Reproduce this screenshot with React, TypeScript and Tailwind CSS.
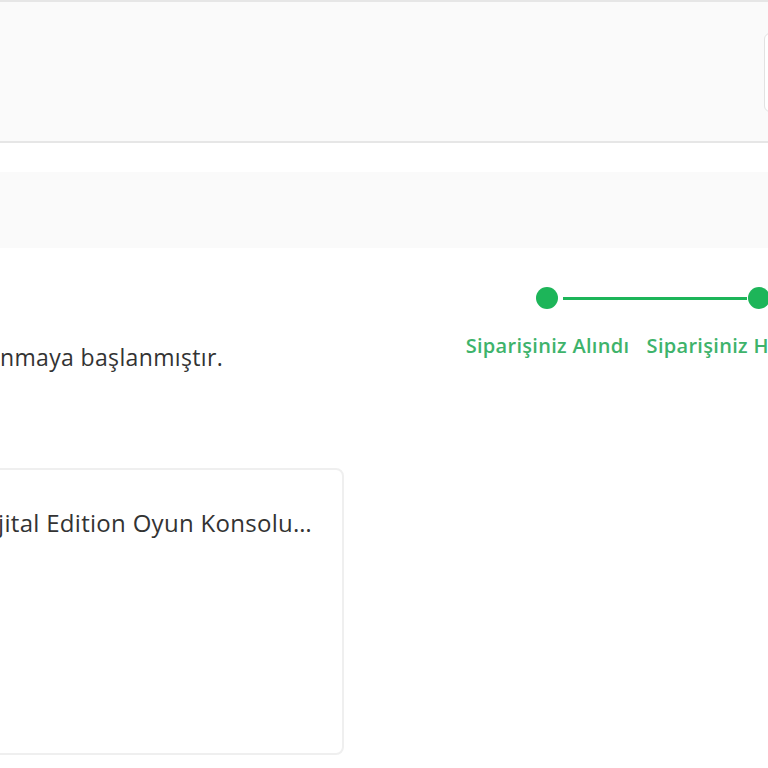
import React from "react";

export default function App() {
  return (
    <div
      className="w-[768px] h-[768px] overflow-hidden bg-white"
      style={{ fontFamily: "'Open Sans', 'Noto Sans', sans-serif" }}
    >
      {/* header */}
      <div className="h-[143px] border-t-2 border-b-2 border-[#e6e6e6] bg-[#fafafa] flex items-start pt-[31px] pl-[764px]">
        <div className="w-[200px] h-[79px] shrink-0 rounded-md border border-[#e2e2e2] bg-white" />
      </div>

      {/* gray band */}
      <div className="mt-[29px] h-[76px] bg-[#fafafa]" />

      {/* status row */}
      <div className="flex">
        <div className="w-[441px] shrink-0 pt-[95px]">
          <p className="text-[23px] leading-[28px] tracking-[0.35px] text-[#333333] whitespace-nowrap">
            nmaya başlanmıştır.
          </p>
        </div>
        <div className="shrink-0 pt-[39px]">
          <div className="flex items-center ml-[95px]">
            <div className="w-[22px] h-[22px] rounded-full bg-[#1db559] shrink-0" />
            <div className="w-[184px] h-[3px] ml-[5px] mr-[1px] bg-[#1db559] shrink-0" />
            <div className="w-[22px] h-[22px] rounded-full bg-[#1db559] shrink-0" />
          </div>
          <div className="flex mt-[25px]">
            <div className="w-[213px] shrink-0 flex justify-center">
              <span className="text-[20px] leading-[24px] tracking-[0.3px] font-semibold text-[#3eb36b] whitespace-nowrap">
                Siparişiniz Alındı
              </span>
            </div>
            <div className="w-[213px] shrink-0 flex justify-center">
              <span className="text-[20px] leading-[24px] tracking-[0.3px] font-semibold text-[#3eb36b] whitespace-nowrap">
                Siparişiniz Hazırlanıyor
              </span>
            </div>
          </div>
        </div>
      </div>

      {/* product card */}
      <div className="mt-[97px] ml-[-100px] w-[444px] h-[287px] rounded-lg border-2 border-[#efefef] bg-white pt-[39px]">
        <div className="ml-[72px] text-[24px] leading-[28px] tracking-[0.3px] text-[#333333] whitespace-nowrap">
          Dijital Edition Oyun Konsolu…
        </div>
      </div>
    </div>
  );
}
